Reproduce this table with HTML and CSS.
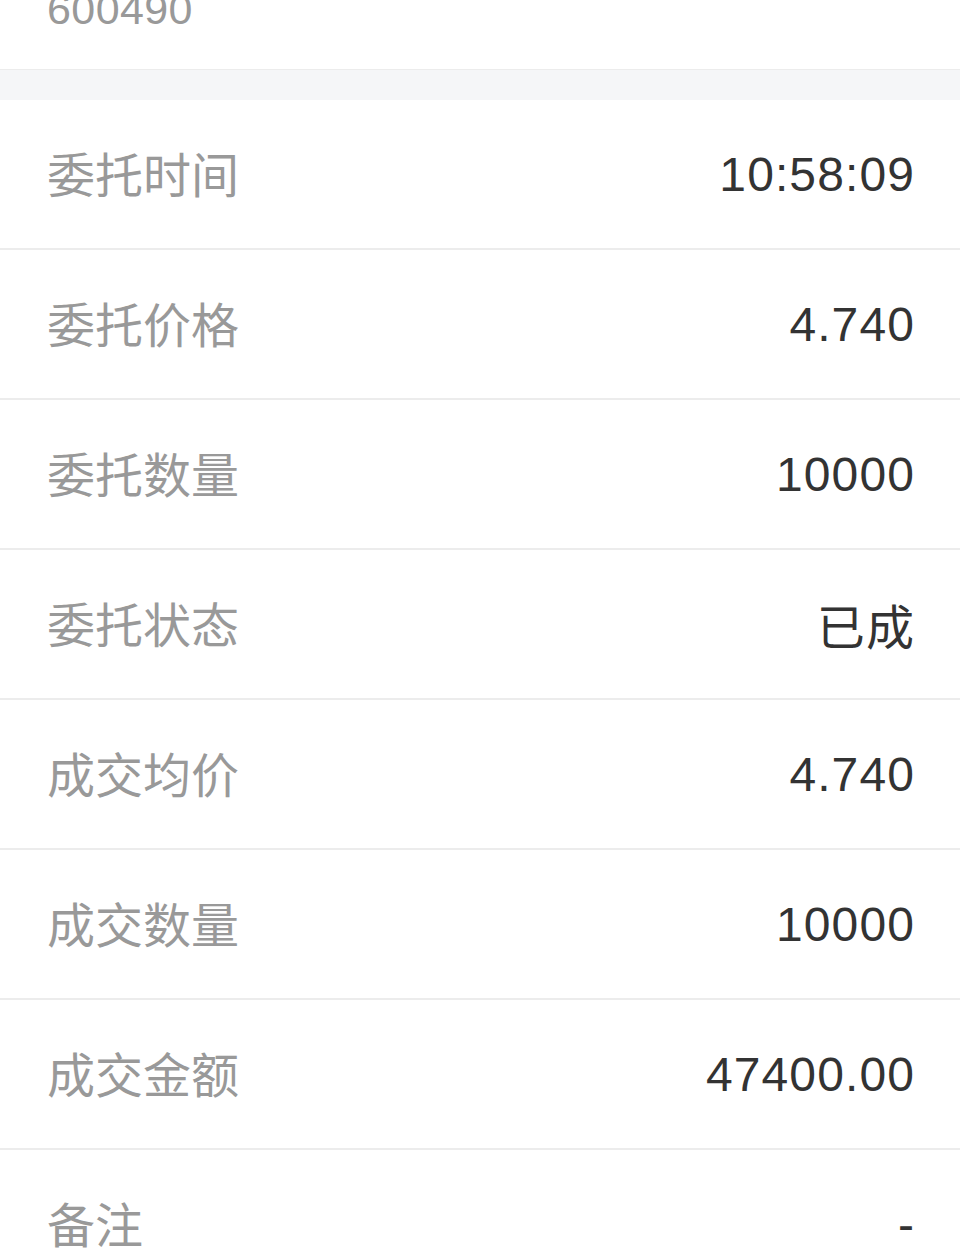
FILE: index.html
```html
<!DOCTYPE html>
<html lang="zh-CN">
<head>
<meta charset="utf-8">
<link rel="stylesheet" href="styles.css">
</head>
<body>
<div class="head">
  <div class="code">600490</div>
</div>
<div class="gap"></div>
<div class="list">
  <div class="row"><span class="label">委托时间</span><span class="value">10:58:09</span></div>
  <div class="row"><span class="label">委托价格</span><span class="value">4.740</span></div>
  <div class="row"><span class="label">委托数量</span><span class="value">10000</span></div>
  <div class="row"><span class="label">委托状态</span><span class="value">已成</span></div>
  <div class="row"><span class="label">成交均价</span><span class="value">4.740</span></div>
  <div class="row"><span class="label">成交数量</span><span class="value">10000</span></div>
  <div class="row"><span class="label">成交金额</span><span class="value">47400.00</span></div>
  <div class="row"><span class="label">备注</span><span class="value">-</span></div>
</div>
</body>
</html>
```
FILE: styles.css
```css
html, body {
  margin: 0;
  padding: 0;
  background: #ffffff;
}
body {
  font-family: "Liberation Sans", "Noto Sans CJK SC", sans-serif;
  overflow: hidden;
}
.head {
  height: 69px;
  border-bottom: 1px solid #ececec;
  padding: 0 47px;
  overflow: hidden;
}
.code {
  font-size: 43px;
  line-height: 43px;
  letter-spacing: 0.4px;
  color: #999999;
  margin-top: -12px;
}
.gap {
  height: 30px;
  background: #f5f6f8;
}
.row {
  height: 148px;
  border-bottom: 2px solid #ececec;
  display: flex;
  align-items: center;
  justify-content: space-between;
  padding: 0 45px 0 47px;
}
.label {
  font-size: 48px;
  color: #999999;
  margin-bottom: 5px;
}
.value {
  font-size: 48px;
  letter-spacing: 1.1px;
  color: #333333;
}
```
